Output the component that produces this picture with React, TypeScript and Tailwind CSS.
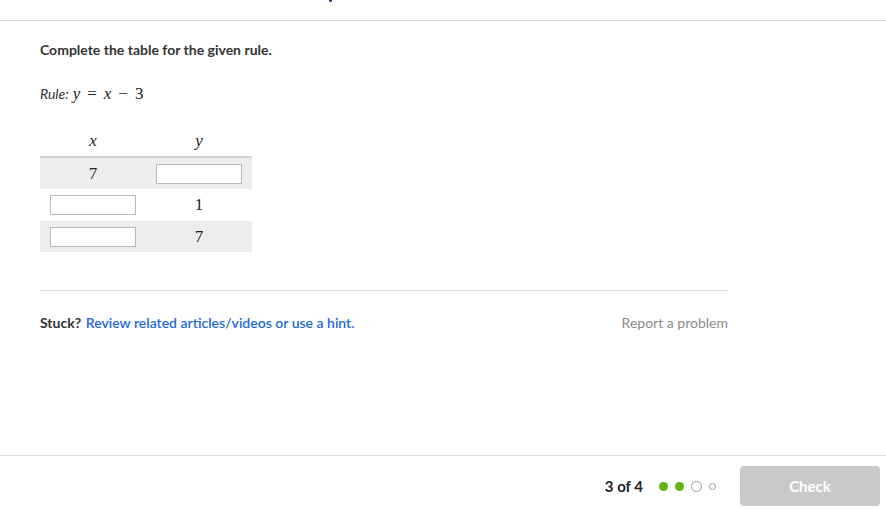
import React from "react";

const lato = { fontFamily: "Lato, 'Open Sans', sans-serif" };

function Box() {
  return <div className="w-[86px] h-[20px] bg-white border border-[#b8b8b8]" />;
}

function MathVar({ children }: { children: React.ReactNode }) {
  return <span className="italic [font-family:'Liberation_Serif',serif]">{children}</span>;
}

export default function App() {
  return (
    <div className="w-[886px] h-[509px] bg-white flex flex-col text-[#21242c]" style={lato}>
      <div className="h-[21px] border-b border-[#dcdcdc] relative shrink-0">
        <div className="absolute left-[329px] top-0 w-[3px] h-[2px] bg-[#1c3d6b] rounded-b" />
      </div>
      <div className="flex-1 px-[40px]">
        <div className="w-[688px]">
          <div className="pt-[19px] text-[14px] font-bold text-[#333] leading-[20px]">Complete the table for the given rule.</div>
          <div className="mt-[21px] flex items-baseline h-[22px]">
            <span className="italic text-[14px] text-[#333] mr-[4px]">Rule:</span>
            <span className="text-[17px] text-[#222] [font-family:'Liberation_Serif',serif]">
              <MathVar>y</MathVar>
              <span className="mx-[7px]">=</span>
              <MathVar>x</MathVar>
              <span className="mx-[7px]">−</span>
              <span>3</span>
            </span>
          </div>
          <div className="mt-[28px] w-[212px] text-[17px] [font-family:'Liberation_Serif',serif] text-[#222]">
            <div className="grid grid-cols-2 h-[27px] items-start leading-[20px] border-b-2 border-[#d4d4d4] text-center">
              <div><MathVar>x</MathVar></div>
              <div><MathVar>y</MathVar></div>
            </div>
            <div className="grid grid-cols-2 h-[31px] items-center bg-[#ededed] justify-items-center">
              <div>7</div>
              <div><Box /></div>
            </div>
            <div className="grid grid-cols-2 h-[32px] items-center justify-items-center">
              <div><Box /></div>
              <div>1</div>
            </div>
            <div className="grid grid-cols-2 h-[31px] items-center bg-[#ededed] justify-items-center">
              <div><Box /></div>
              <div>7</div>
            </div>
          </div>
          <div className="mt-[38px] border-t border-[#dcdcdc]" />
          <div className="mt-[23px] flex items-center justify-between text-[14px] leading-[18px]">
            <div>
              <span className="font-bold text-[#333]">Stuck?</span>{" "}
              <span className="font-semibold text-[#2368d6] ml-[1px]">Review related articles/videos or use a hint.</span>
            </div>
            <div className="text-[#8a8a8a]">Report a problem</div>
          </div>
        </div>
      </div>
      <div className="h-[54px] border-t border-[#dcdcdc] flex items-start justify-end pr-[6px] pt-[10px] shrink-0">
        <div className="h-[40px] flex items-center">
          <span className="text-[15px] font-bold text-[#21242c] mr-[16px]">3 of 4</span>
          <div className="flex items-center gap-[7px] mr-[24px]">
            <span className="w-[9px] h-[9px] rounded-full bg-[#5fb515]" />
            <span className="w-[9px] h-[9px] rounded-full bg-[#5fb515]" />
            <span className="w-[11px] h-[11px] rounded-full border-[1.5px] border-[#9a9a9a]" />
            <span className="w-[7px] h-[7px] rounded-full border border-[#9a9a9a]" />
          </div>
          <div className="w-[140px] h-[40px] rounded-[4px] bg-[#c9c9c9] text-white font-bold text-[15px] flex items-center justify-center">Check</div>
        </div>
      </div>
    </div>
  );
}
